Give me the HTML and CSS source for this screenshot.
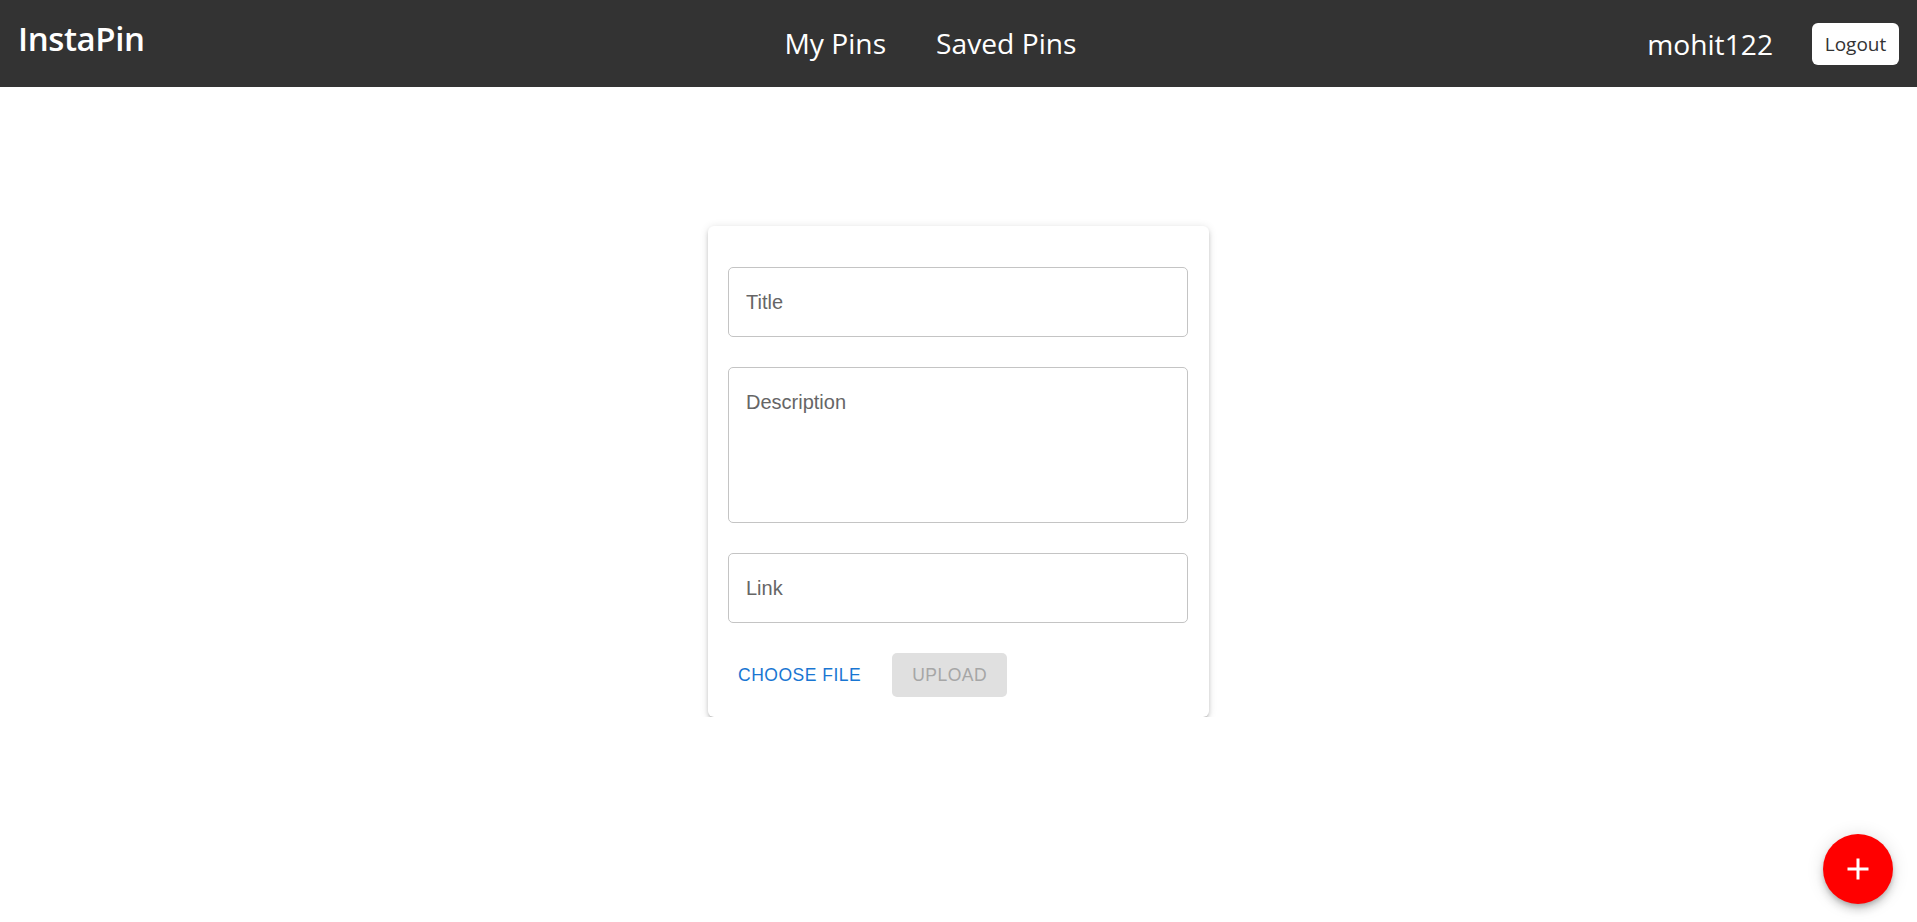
FILE: index.html
```html
<!DOCTYPE html>
<html lang="en">
<head>
<meta charset="utf-8">
<title>InstaPin</title>
<link rel="stylesheet" href="styles.css">
</head>
<body>
<header class="topbar">
  <div class="brand">InstaPin</div>
  <nav class="nav">
    <a class="nav-link" href="#">My Pins</a>
    <a class="nav-link" href="#">Saved Pins</a>
  </nav>
  <div class="user">
    <span class="username">mohit122</span>
    <button class="logout">Logout</button>
  </div>
</header>
<main class="main">
  <form class="card">
    <input class="field" type="text" placeholder="Title">
    <textarea class="field area" placeholder="Description"></textarea>
    <input class="field" type="text" placeholder="Link">
    <div class="actions">
      <button type="button" class="btn-text">Choose File</button>
      <button type="button" class="btn-disabled" disabled>Upload</button>
    </div>
  </form>
</main>
<button class="fab" aria-label="add">
  <svg viewBox="0 0 24 24" width="36" height="36"><path d="M19 13h-6v6h-2v-6H5v-2h6V5h2v6h6v2z" fill="#fff"/></svg>
</button>
</body>
</html>
```
FILE: styles.css
```css
* { box-sizing: border-box; }
html, body { margin: 0; padding: 0; background: #fff; }
body { font-family: "Liberation Sans", Arial, sans-serif; }

.topbar {
  height: 87px;
  background: #333333;
  display: grid;
  grid-template-columns: 1fr auto 1fr;
  align-items: center;
  padding: 0 18px;
  font-family: "Open Sans", "Noto Sans", sans-serif;
  color: #fff;
}
.brand {
  font-size: 33px;
  font-weight: 600;
  letter-spacing: -0.4px;
  margin-bottom: 10px;
  justify-self: start;
}
.nav {
  display: flex;
  gap: 50px;
  padding-right: 56px;
  margin-bottom: 2px;
}
.nav-link {
  color: #fff;
  text-decoration: none;
  font-size: 28.2px;
}
.user {
  justify-self: end;
  display: flex;
  align-items: center;
  gap: 39px;
}
.username { font-size: 28.2px; }
.logout {
  font-family: "Open Sans", "Noto Sans", sans-serif;
  font-size: 19px;
  color: #333;
  background: #fff;
  border: 0;
  border-radius: 6px;
  height: 42px;
  width: 87px;
  padding: 0;
}

.main {
  display: flex;
  justify-content: center;
  padding-top: 139px;
}
.card {
  width: 501px;
  background: #fff;
  border-radius: 6px;
  box-shadow: 0 3px 3px -2px rgba(0,0,0,0.2), 0 3px 4px 0 rgba(0,0,0,0.14), 0 1px 8px 0 rgba(0,0,0,0.12);
  padding: 41px 20px 20px 20px;
  display: flex;
  flex-direction: column;
  gap: 30px;
}
.field {
  display: block;
  width: 460px;
  height: 70px;
  border: 1px solid #c4c4c4;
  border-radius: 5px;
  padding: 20px 17px;
  font-family: "Liberation Sans", Arial, sans-serif;
  font-size: 20px;
  line-height: 28px;
  color: #222;
  outline: none;
  resize: none;
}
.field::placeholder { color: #666; opacity: 1; }
.area { height: 156px; }

.actions {
  display: flex;
  align-items: center;
  gap: 21px;
  height: 44px;
}
.btn-text {
  font-family: "Liberation Sans", Arial, sans-serif;
  font-size: 17.5px;
  letter-spacing: 0.5px;
  text-transform: uppercase;
  color: #1976d2;
  background: none;
  border: 0;
  padding: 8px 10px;
  height: 44px;
}
.btn-disabled {
  font-family: "Liberation Sans", Arial, sans-serif;
  font-size: 17.5px;
  letter-spacing: 0.5px;
  text-transform: uppercase;
  color: #a6a6a6;
  background: #e0e0e0;
  border: 0;
  border-radius: 5px;
  height: 44px;
  width: 115px;
  padding: 0;
}

.fab {
  position: fixed;
  right: 24px;
  bottom: 18px;
  width: 70px;
  height: 70px;
  border-radius: 50%;
  border: 0;
  background: #ff0000;
  display: flex;
  align-items: center;
  justify-content: center;
  padding: 0;
  box-shadow: 0 3px 5px -1px rgba(0,0,0,0.2), 0 6px 10px 0 rgba(0,0,0,0.14), 0 1px 18px 0 rgba(0,0,0,0.12);
}
```
